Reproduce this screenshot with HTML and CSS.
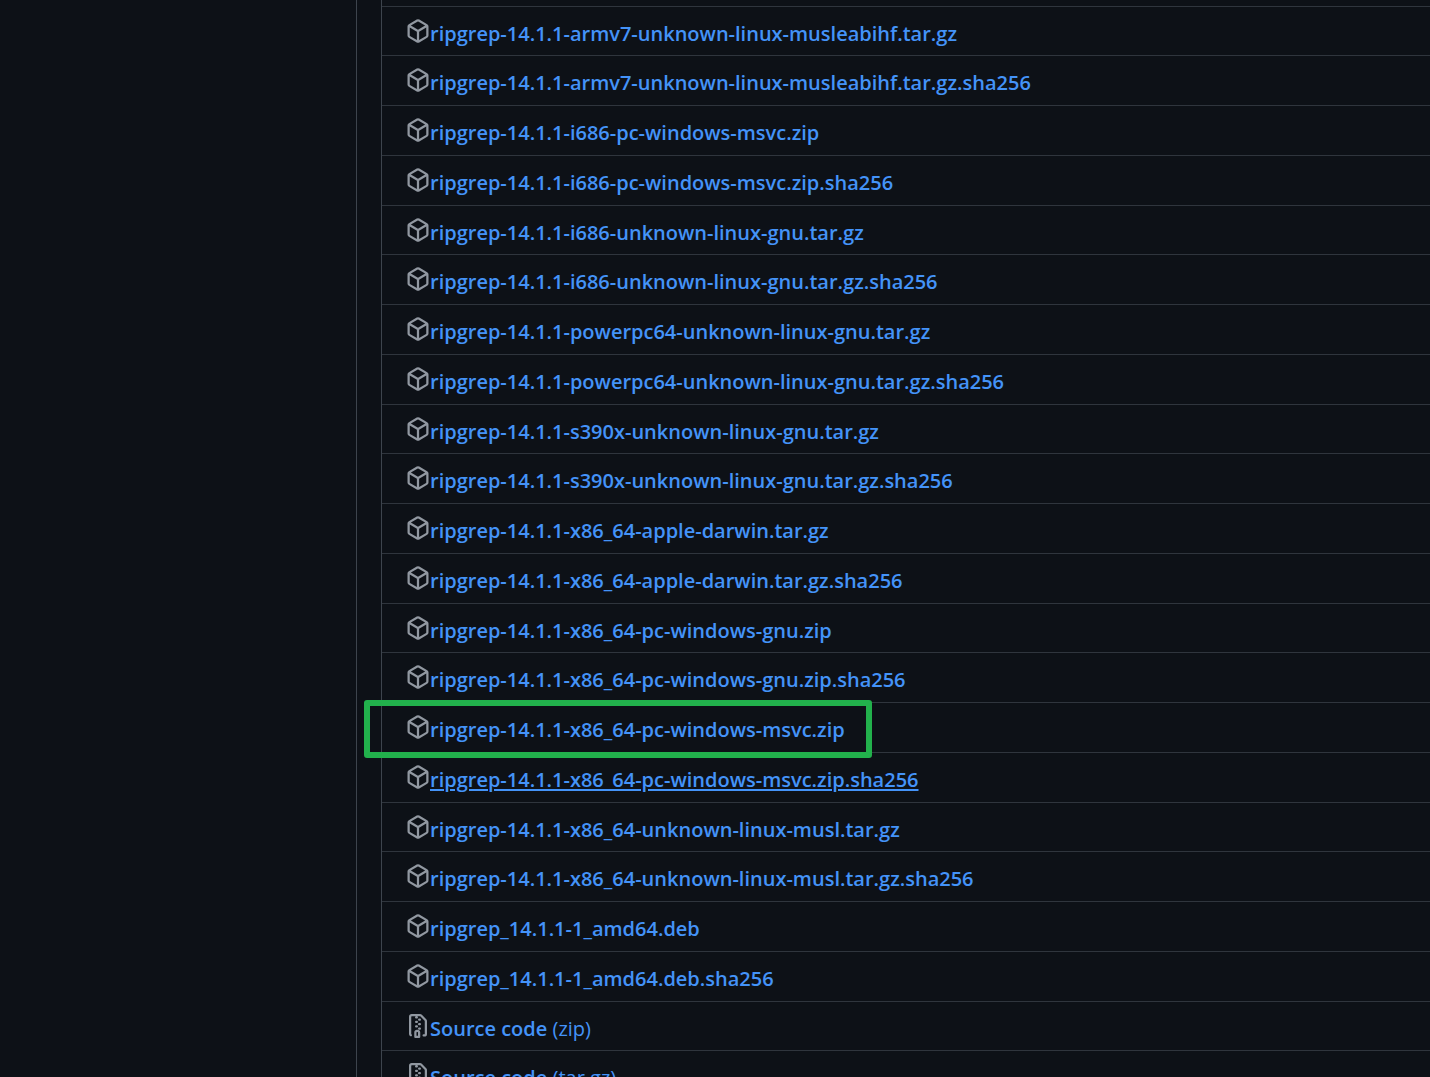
FILE: index.html
```html
<!DOCTYPE html>
<html lang="en">
<head>
    <meta charset="UTF-8">
    <meta name="viewport" content="width=device-width, initial-scale=1.0">
    <title>Release 14.1.1</title>
    <link rel="stylesheet" href="styles.css">
</head>
<body>
    <svg class="icon-defs" aria-hidden="true">
        <symbol id="package" viewBox="0 0 16 16">
            <path d="m8.878.392 5.25 3.045c.54.314.872.89.872 1.514v6.098a1.75 1.75 0 0 1-.872 1.514l-5.25 3.045a1.75 1.75 0 0 1-1.756 0l-5.25-3.045A1.75 1.75 0 0 1 1 11.049V4.951c0-.624.332-1.201.872-1.514L7.122.392a1.75 1.75 0 0 1 1.756 0ZM7.875 1.69l-4.63 2.685L8 7.133l4.755-2.758-4.63-2.685a.248.248 0 0 0-.25 0ZM2.5 5.677v5.372c0 .09.047.171.125.216l4.625 2.683V8.432Zm6.25 8.271 4.625-2.683a.25.25 0 0 0 .125-.216V5.677L8.75 8.432Z"/>
        </symbol>
        <symbol id="file-zip" viewBox="0 0 16 16">
            <path d="M3.5 1.75v11.5c0 .09.048.173.126.217a.75.75 0 0 1-.752 1.298A1.748 1.748 0 0 1 2 13.25V1.75C2 .784 2.784 0 3.75 0h5.586c.464 0 .909.185 1.237.513l2.914 2.914c.329.328.513.773.513 1.237v8.586A1.75 1.75 0 0 1 12.25 15h-.5a.75.75 0 0 1 0-1.5h.5a.25.25 0 0 0 .25-.25V4.664a.25.25 0 0 0-.073-.177L9.513 1.573a.25.25 0 0 0-.177-.073H7.25a.75.75 0 0 1 0 1.5h-.5a.75.75 0 0 1 0-1.5h-3a.25.25 0 0 0-.25.25Zm3.75 8.75h.5c.966 0 1.75.784 1.75 1.75v3a.75.75 0 0 1-.75.75h-2.5a.75.75 0 0 1-.75-.75v-3c0-.966.784-1.75 1.75-1.75ZM6 5.25a.75.75 0 0 1 .75-.75h.5a.75.75 0 0 1 0 1.5h-.5A.75.75 0 0 1 6 5.25Zm.75 2.25h.5a.75.75 0 0 1 0 1.5h-.5a.75.75 0 0 1 0-1.5ZM8 6.75A.75.75 0 0 1 8.75 6h.5a.75.75 0 0 1 0 1.5h-.5A.75.75 0 0 1 8 6.75ZM8.75 3h.5a.75.75 0 0 1 0 1.5h-.5a.75.75 0 0 1 0-1.5ZM8 9.75A.75.75 0 0 1 8.75 9h.5a.75.75 0 0 1 0 1.5h-.5A.75.75 0 0 1 8 9.75Zm-1 2.5v2.25h1v-2.25a.25.25 0 0 0-.25-.25h-.5a.25.25 0 0 0-.25.25Z"/>
        </symbol>
    </svg>
    <div class="release">
        <div class="release-side"></div>
        <main class="release-main">
            <ul class="assets">
                <li class="asset"><svg class="icon"><use href="#package"/></svg><a href="#">ripgrep-14.1.1-armv7-unknown-linux-musleabihf.tar.gz</a></li>
                <li class="asset"><svg class="icon"><use href="#package"/></svg><a href="#">ripgrep-14.1.1-armv7-unknown-linux-musleabihf.tar.gz.sha256</a></li>
                <li class="asset"><svg class="icon"><use href="#package"/></svg><a href="#">ripgrep-14.1.1-i686-pc-windows-msvc.zip</a></li>
                <li class="asset"><svg class="icon"><use href="#package"/></svg><a href="#">ripgrep-14.1.1-i686-pc-windows-msvc.zip.sha256</a></li>
                <li class="asset"><svg class="icon"><use href="#package"/></svg><a href="#">ripgrep-14.1.1-i686-unknown-linux-gnu.tar.gz</a></li>
                <li class="asset"><svg class="icon"><use href="#package"/></svg><a href="#">ripgrep-14.1.1-i686-unknown-linux-gnu.tar.gz.sha256</a></li>
                <li class="asset"><svg class="icon"><use href="#package"/></svg><a href="#">ripgrep-14.1.1-powerpc64-unknown-linux-gnu.tar.gz</a></li>
                <li class="asset"><svg class="icon"><use href="#package"/></svg><a href="#">ripgrep-14.1.1-powerpc64-unknown-linux-gnu.tar.gz.sha256</a></li>
                <li class="asset"><svg class="icon"><use href="#package"/></svg><a href="#">ripgrep-14.1.1-s390x-unknown-linux-gnu.tar.gz</a></li>
                <li class="asset"><svg class="icon"><use href="#package"/></svg><a href="#">ripgrep-14.1.1-s390x-unknown-linux-gnu.tar.gz.sha256</a></li>
                <li class="asset"><svg class="icon"><use href="#package"/></svg><a href="#">ripgrep-14.1.1-x86_64-apple-darwin.tar.gz</a></li>
                <li class="asset"><svg class="icon"><use href="#package"/></svg><a href="#">ripgrep-14.1.1-x86_64-apple-darwin.tar.gz.sha256</a></li>
                <li class="asset"><svg class="icon"><use href="#package"/></svg><a href="#">ripgrep-14.1.1-x86_64-pc-windows-gnu.zip</a></li>
                <li class="asset"><svg class="icon"><use href="#package"/></svg><a href="#">ripgrep-14.1.1-x86_64-pc-windows-gnu.zip.sha256</a></li>
                <li class="asset marked"><svg class="icon"><use href="#package"/></svg><a href="#">ripgrep-14.1.1-x86_64-pc-windows-msvc.zip</a></li>
                <li class="asset"><svg class="icon"><use href="#package"/></svg><a href="#" class="active">ripgrep-14.1.1-x86_64-pc-windows-msvc.zip.sha256</a></li>
                <li class="asset"><svg class="icon"><use href="#package"/></svg><a href="#">ripgrep-14.1.1-x86_64-unknown-linux-musl.tar.gz</a></li>
                <li class="asset"><svg class="icon"><use href="#package"/></svg><a href="#">ripgrep-14.1.1-x86_64-unknown-linux-musl.tar.gz.sha256</a></li>
                <li class="asset"><svg class="icon"><use href="#package"/></svg><a href="#">ripgrep_14.1.1-1_amd64.deb</a></li>
                <li class="asset"><svg class="icon"><use href="#package"/></svg><a href="#">ripgrep_14.1.1-1_amd64.deb.sha256</a></li>
                <li class="asset"><svg class="icon"><use href="#file-zip"/></svg><a href="#">Source code <span class="format">(zip)</span></a></li>
                <li class="asset"><svg class="icon"><use href="#file-zip"/></svg><a href="#">Source code <span class="format">(tar.gz)</span></a></li>
            </ul>
        </main>
    </div>
</body>
</html>
```
FILE: styles.css
```css
body {
    margin: 0;
    background-color: #0d1117;
    color: #f0f6fc;
    font-family: "Segoe UI", "Open Sans", "Noto Sans", sans-serif;
    font-size: 20px;
    line-height: 30px;
}

.icon-defs {
    display: none;
}

.release {
    display: flex;
    height: 100vh;
    overflow: hidden;
}

.release-side {
    flex: 0 0 356px;
}

.release-main {
    flex: 1;
    min-width: 0;
    padding-left: 24px;
    border-left: 1px solid #3d444d;
}

.assets {
    list-style: none;
    margin: 0;
    padding: 6px 0 0;
    border-left: 1px solid #3d444d;
}

.asset {
    position: relative;
    display: flex;
    align-items: flex-start;
    box-sizing: border-box;
    min-height: 50px;
    padding: 12px 24px 0;
    border-top: 1px solid #2f353d;
}

.asset:nth-child(4n+1) {
    min-height: 49px;
}

.asset a {
    color: #4493f8;
    font-weight: 600;
    text-decoration: none;
    white-space: nowrap;
}

.asset a:hover,
.asset a.active {
    text-decoration: underline;
    text-decoration-thickness: 2px;
    text-underline-offset: 2px;
}

.format {
    font-weight: 400;
}

.icon {
    flex: none;
    width: 24px;
    height: 24px;
    fill: #9198a1;
}

/* green frame around the file to download */
.marked::after {
    content: "";
    position: absolute;
    z-index: 1;
    top: -3px;
    left: -18px;
    box-sizing: border-box;
    width: 508px;
    height: 58px;
    border: 6px solid #22b14c;
    border-radius: 3px;
}
```
